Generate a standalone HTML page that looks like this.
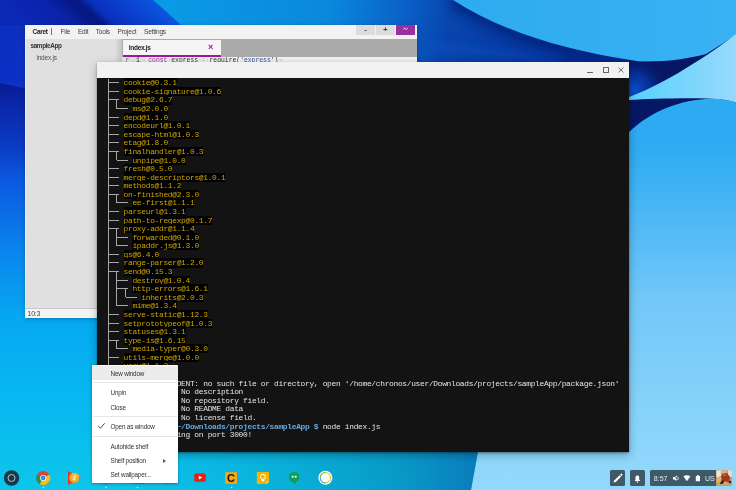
<!DOCTYPE html>
<html><head><meta charset="utf-8">
<style>
*{margin:0;padding:0;box-sizing:border-box}
html,body{width:736px;height:490px;overflow:hidden;background:#0a6fd8}
body{position:relative;font-family:"Liberation Sans",sans-serif;-webkit-font-smoothing:antialiased}
.abs{position:absolute}
#wall{position:absolute;left:0;top:0}
/* caret */
#caret{will-change:transform;position:absolute;left:25px;top:25px;width:392px;height:293px;background:#f2f2f2;box-shadow:0 1px 4px rgba(0,0,0,.25)}
#menubar{position:absolute;left:0;top:0;width:392px;height:14px;background:#f2f2f2}
.mi{position:absolute;top:2.6px;font-size:6.5px;letter-spacing:-0.2px;line-height:8px;color:#404040;white-space:nowrap}
#side{position:absolute;left:0;top:14px;width:97px;height:269px;background:#e0e0e0}
#side:after{content:"";position:absolute;right:0;top:0;width:7px;height:100%;background:linear-gradient(90deg,rgba(0,0,0,0),rgba(0,0,0,.13))}
#status{position:absolute;left:0;top:283px;width:392px;height:10px;background:#f5f5f5;border-top:1px solid #c9c9c9}
#tabbar{position:absolute;left:97px;top:14px;width:295px;height:18px;background:#ababab}
#tab{position:absolute;left:1px;top:1px;width:98px;height:17px;background:#f5f5f5;border-bottom:2px solid #9a1a9e}
#editor{position:absolute;left:97px;top:32px;width:295px;height:251px;background:#f2f2f2}
.btn{position:absolute;top:0;height:9.5px;width:19px;background:#dcdcdc;color:#444;font-size:8px;line-height:9px;text-align:center;font-weight:bold}
/* terminal */
#term{position:absolute;left:97px;top:62px;width:532px;height:389.6px;background:#131313;box-shadow:0 3px 9px rgba(0,0,0,.28),0 1px 2px rgba(0,0,0,.35)}
#ttitle{position:absolute;left:0;top:0;width:100%;height:16px;background:#f2f2f2}
#tcont{position:absolute;left:0;top:16px;width:100%;height:374px;overflow:hidden;will-change:transform}
.tr,.tw{position:absolute;font-family:"Liberation Mono",monospace;font-size:7.9px;letter-spacing:-0.31px;line-height:9px;height:9.1px;white-space:pre}
.tr{color:#cca400;background:#020202}
.tw{color:#e4e4e4}
.pr{color:#6aa6da;font-weight:bold}
/* menu */
#menu{will-change:transform;position:absolute;left:92px;top:365px;width:86px;height:118px;background:#fff;box-shadow:0 1px 3px rgba(0,0,0,.3);border-radius:1px}
.mt{position:absolute;left:18.5px;font-size:6.3px;letter-spacing:-0.17px;line-height:8px;color:#303030;white-space:nowrap}
.sep{position:absolute;left:1px;width:84px;height:1px;background:#e6e6e6}
/* status */
.sbtn{position:absolute;top:470.3px;height:15.6px;background:#3e5968;border-radius:1.5px}
</style></head><body>
<svg id="wall" width="736" height="490" viewBox="0 0 736 490">
<defs>
<linearGradient id="gbase" gradientUnits="userSpaceOnUse" x1="0" y1="0" x2="0" y2="490">
 <stop offset="0" stop-color="#0b2fbe"/>
 <stop offset="0.16" stop-color="#0b31c4"/>
 <stop offset="0.3" stop-color="#0b45cc"/>
 <stop offset="0.37" stop-color="#0a5ae0"/>
 <stop offset="0.51" stop-color="#0a84ec"/>
 <stop offset="0.65" stop-color="#06a8f2"/>
 <stop offset="0.82" stop-color="#08b8f0"/>
 <stop offset="1" stop-color="#0cc6ea"/>
</linearGradient>
<linearGradient id="gdark" gradientUnits="userSpaceOnUse" x1="0" y1="85" x2="0" y2="175">
 <stop offset="0" stop-color="#081c96" stop-opacity="1"/>
 <stop offset="0.25" stop-color="#0a24a4" stop-opacity="0.8"/>
 <stop offset="1" stop-color="#0a30b8" stop-opacity="0"/>
</linearGradient>
<linearGradient id="gbl" gradientUnits="userSpaceOnUse" x1="110" y1="0" x2="478" y2="0">
 <stop offset="0" stop-color="#0aa8d8" stop-opacity="0"/>
 <stop offset="0.45" stop-color="#08a4cc" stop-opacity="0.6"/>
 <stop offset="0.8" stop-color="#0894c4" stop-opacity="0.92"/>
 <stop offset="1" stop-color="#0a7cbc" stop-opacity="1"/>
</linearGradient>
<linearGradient id="glow" gradientUnits="userSpaceOnUse" x1="0" y1="120" x2="0" y2="480">
 <stop offset="0" stop-color="#2caaf2"/>
 <stop offset="0.08" stop-color="#2eabf2"/>
 <stop offset="0.36" stop-color="#5cbef6"/>
 <stop offset="0.5" stop-color="#72c8f8"/>
 <stop offset="0.8" stop-color="#86d2fa"/>
 <stop offset="1" stop-color="#92d8fc"/>
</linearGradient>
<linearGradient id="gup" x1="0" y1="0" x2="1" y2="0">
 <stop offset="0" stop-color="#2eaaf0"/>
 <stop offset="1" stop-color="#38b2f3"/>
</linearGradient>
<linearGradient id="gwedge" gradientUnits="userSpaceOnUse" x1="629" y1="0" x2="736" y2="0">
 <stop offset="0" stop-color="#56d2fd"/>
 <stop offset="0.45" stop-color="#74d4fc"/>
 <stop offset="1" stop-color="#98dafb"/>
</linearGradient>
<linearGradient id="gtop" gradientUnits="userSpaceOnUse" x1="170" y1="0" x2="560" y2="70">
 <stop offset="0" stop-color="#0a9ae6"/>
 <stop offset="0.4" stop-color="#0a88dc"/>
 <stop offset="0.58" stop-color="#0a62c8"/>
 <stop offset="0.7" stop-color="#0846ae"/>
 <stop offset="1" stop-color="#072e94"/>
</linearGradient>
<linearGradient id="gband" gradientUnits="userSpaceOnUse" x1="0" y1="0" x2="153" y2="0" gradientTransform="skewX(48)">
 <stop offset="0" stop-color="#0b28b6"/>
 <stop offset="0.3" stop-color="#0a22a8"/>
 <stop offset="0.42" stop-color="#071a8c"/>
 <stop offset="0.5" stop-color="#061782"/>
 <stop offset="0.58" stop-color="#0a30bc"/>
 <stop offset="0.8" stop-color="#0a42d0"/>
 <stop offset="1" stop-color="#0a56e0"/>
</linearGradient>
<filter id="blur5" x="-20%" y="-50%" width="140%" height="200%"><feGaussianBlur stdDeviation="5"/></filter>
<linearGradient id="gnavy" gradientUnits="userSpaceOnUse" x1="420" y1="25" x2="620" y2="62">
 <stop offset="0" stop-color="#0a48b8"/>
 <stop offset="1" stop-color="#062c92"/>
</linearGradient>
<radialGradient id="gglow" gradientUnits="userSpaceOnUse" cx="634" cy="90" r="34">
 <stop offset="0" stop-color="#0a50cc"/>
 <stop offset="0.5" stop-color="#0838a8" stop-opacity="0.7"/>
 <stop offset="1" stop-color="#061766" stop-opacity="0"/>
</radialGradient>
</defs>
<rect width="736" height="490" fill="url(#gbase)"/>
<path d="M0,83 L97,104 L97,200 L0,200 Z" fill="url(#gdark)"/>
<!-- top bands -->
<path d="M0,0 L153,0 L181,25 L0,25 Z" fill="url(#gband)"/>
<path d="M153,0 L736,0 L736,140 L630,140 L630,62 L97,62 L97,25 L181,25 Z" fill="url(#gtop)"/>
<path d="M453,0 C500,30 560,50 640,61.5" fill="none" stroke="#05287f" stroke-width="16" filter="url(#blur5)" opacity="0.85"/>
<path d="M430,40 L560,58 L560,64 L430,50 Z" fill="#0a50c4" opacity="0.5" filter="url(#blur5)"/>
<rect x="629" y="45" width="107" height="100" fill="#061766"/>
<!-- upper light-blue -->
<path d="M453,0 L736,0 L736,35 L706,54 C690,58 670,62 640,61.5 C560,50 500,30 453,0 Z" fill="url(#gup)"/>
<!-- navy between -->
<path d="M629,61 C670,62 690,58 706,54 L700,62 C680,75 655,88 629,97 Z" fill="url(#gglow)"/>
<!-- wedge -->
<path d="M736,34 C700,62 655,88 629,97 L629,100 C650,98.5 690,97.5 712,98.7 C722,99.3 730,100.5 736,102.4 Z" fill="url(#gwedge)"/>
<!-- lower light blue -->
<path d="M736,102.4 C730,100.5 722,98.7 712,98.7 C680,99 650,112 629,132 L629,180 C560,260 490,360 478,452 L471,490 L736,490 Z" fill="url(#glow)"/>
<!-- bottom left shading -->
<path d="M97,440 L480,440 L471,490 L97,490 Z" fill="url(#gbl)"/>
</svg>

<!-- Caret window -->
<div id="caret">
 <div id="menubar">
  <div class="mi" style="left:7.6px;font-size:6.5px;letter-spacing:-0.3px;font-weight:bold;color:#222">Caret</div>
  <div class="abs" style="left:26.4px;top:3.3px;width:0.7px;height:7px;background:#777"></div>
  <div class="mi" style="left:35.5px">File</div>
  <div class="mi" style="left:52.9px">Edit</div>
  <div class="mi" style="left:70.7px">Tools</div>
  <div class="mi" style="left:92.5px">Project</div>
  <div class="mi" style="left:119px">Settings</div>
  <div class="btn" style="left:331px">-</div>
  <div class="btn" style="left:350.8px">+</div>
  <div class="btn" style="left:371.2px;background:#9c2fa0"><svg style="position:absolute;left:7.3px;top:2.4px" width="5" height="4"><path d="M0.5,2.4 C1.1,1 1.9,1 2.5,1.8 C3.1,2.6 3.9,2.6 4.5,1.3" fill="none" stroke="#fff" stroke-width="0.9"/></svg></div>
 </div>
 <div id="side">
  <div class="mi" style="left:5.5px;top:3px;font-size:6.4px;letter-spacing:-0.38px;font-weight:bold;color:#333">sampleApp</div>
  <div class="mi" style="left:11.4px;top:14.6px;color:#505050">index.js</div>
 </div>
 <div id="tabbar"><div id="tab">
  <div class="mi" style="left:5.8px;top:3.7px;font-size:6.5px;letter-spacing:-0.3px;font-weight:bold;color:#222">index.js</div>
  <div class="abs" style="left:85px;top:2px;font-size:9px;line-height:10px;color:#9a1a9e;font-weight:bold">×</div>
 </div></div>
 <div id="editor">
  <div class="abs" style="left:0;top:0;width:24px;height:8px;background:#e4e4e4"></div>
  <div class="abs" style="left:3.5px;top:-0.3px;font-family:'Liberation Mono',monospace;font-size:6.38px;line-height:7px;color:#666">r</div>
  <div class="abs" style="left:14px;top:-0.3px;font-family:'Liberation Mono',monospace;font-size:6.38px;line-height:7px;color:#333">1</div>
  <div class="abs" style="left:26.3px;top:-0.3px;font-family:'Liberation Mono',monospace;font-size:6.38px;line-height:7px;white-space:pre;color:#333"><span style="color:#a020a0">const</span><span style="color:#bbb">·</span>express<span style="color:#bbb">·=·</span>require('<span style="color:#3050b0">express</span>')<span style="color:#bbb">¬</span></div>
 </div>
 <div class="abs" style="left:0;top:14px;width:1px;height:269px;background:#f0f0f0"></div>
 <div id="status"><div class="mi" style="left:2.5px;top:0.9px;font-size:7px;letter-spacing:-0.25px;color:#444">10:3</div></div>
</div>

<!-- Terminal -->
<div id="term">
 <div id="ttitle">
  <div class="abs" style="left:490px;top:10px;width:6px;height:1px;background:#666"></div>
  <div class="abs" style="left:506px;top:5.3px;width:6px;height:5.4px;border:1px solid #666"></div>
  <svg class="abs" style="left:521px;top:5px" width="6" height="6"><path d="M0.5,0.5 L5.5,5.5 M5.5,0.5 L0.5,5.5" stroke="#666" stroke-width="0.9"/></svg>
 </div>
 <div id="tcont">
  <svg class="abs" style="left:0;top:0" width="532" height="374"><g stroke="#a8a8a8" stroke-width="1" shape-rendering="crispEdges">
<line x1="11.07" y1="0.50" x2="11.07" y2="9.08"/>
<line x1="11.07" y1="4.79" x2="13.29" y2="4.79"/>
<line x1="13.29" y1="4.79" x2="17.72" y2="4.79"/>
<line x1="17.72" y1="4.79" x2="22.15" y2="4.79"/>
<line x1="11.07" y1="9.08" x2="11.07" y2="17.66"/>
<line x1="11.07" y1="13.37" x2="13.29" y2="13.37"/>
<line x1="13.29" y1="13.37" x2="17.72" y2="13.37"/>
<line x1="17.72" y1="13.37" x2="22.15" y2="13.37"/>
<line x1="11.07" y1="17.66" x2="11.07" y2="26.24"/>
<line x1="11.07" y1="21.95" x2="13.29" y2="21.95"/>
<line x1="13.29" y1="21.95" x2="17.72" y2="21.95"/>
<line x1="17.72" y1="21.95" x2="22.15" y2="21.95"/>
<line x1="19.93" y1="21.95" x2="19.93" y2="26.24"/>
<line x1="11.07" y1="26.24" x2="11.07" y2="34.82"/>
<line x1="19.93" y1="26.24" x2="19.93" y2="30.53"/>
<line x1="19.93" y1="30.53" x2="22.15" y2="30.53"/>
<line x1="22.15" y1="30.53" x2="26.58" y2="30.53"/>
<line x1="26.58" y1="30.53" x2="31.01" y2="30.53"/>
<line x1="11.07" y1="34.82" x2="11.07" y2="43.40"/>
<line x1="11.07" y1="39.11" x2="13.29" y2="39.11"/>
<line x1="13.29" y1="39.11" x2="17.72" y2="39.11"/>
<line x1="17.72" y1="39.11" x2="22.15" y2="39.11"/>
<line x1="11.07" y1="43.40" x2="11.07" y2="51.98"/>
<line x1="11.07" y1="47.69" x2="13.29" y2="47.69"/>
<line x1="13.29" y1="47.69" x2="17.72" y2="47.69"/>
<line x1="17.72" y1="47.69" x2="22.15" y2="47.69"/>
<line x1="11.07" y1="51.98" x2="11.07" y2="60.56"/>
<line x1="11.07" y1="56.27" x2="13.29" y2="56.27"/>
<line x1="13.29" y1="56.27" x2="17.72" y2="56.27"/>
<line x1="17.72" y1="56.27" x2="22.15" y2="56.27"/>
<line x1="11.07" y1="60.56" x2="11.07" y2="69.14"/>
<line x1="11.07" y1="64.85" x2="13.29" y2="64.85"/>
<line x1="13.29" y1="64.85" x2="17.72" y2="64.85"/>
<line x1="17.72" y1="64.85" x2="22.15" y2="64.85"/>
<line x1="11.07" y1="69.14" x2="11.07" y2="77.72"/>
<line x1="11.07" y1="73.43" x2="13.29" y2="73.43"/>
<line x1="13.29" y1="73.43" x2="17.72" y2="73.43"/>
<line x1="17.72" y1="73.43" x2="22.15" y2="73.43"/>
<line x1="19.93" y1="73.43" x2="19.93" y2="77.72"/>
<line x1="11.07" y1="77.72" x2="11.07" y2="86.30"/>
<line x1="19.93" y1="77.72" x2="19.93" y2="82.01"/>
<line x1="19.93" y1="82.01" x2="22.15" y2="82.01"/>
<line x1="22.15" y1="82.01" x2="26.58" y2="82.01"/>
<line x1="26.58" y1="82.01" x2="31.01" y2="82.01"/>
<line x1="11.07" y1="86.30" x2="11.07" y2="94.88"/>
<line x1="11.07" y1="90.59" x2="13.29" y2="90.59"/>
<line x1="13.29" y1="90.59" x2="17.72" y2="90.59"/>
<line x1="17.72" y1="90.59" x2="22.15" y2="90.59"/>
<line x1="11.07" y1="94.88" x2="11.07" y2="103.46"/>
<line x1="11.07" y1="99.17" x2="13.29" y2="99.17"/>
<line x1="13.29" y1="99.17" x2="17.72" y2="99.17"/>
<line x1="17.72" y1="99.17" x2="22.15" y2="99.17"/>
<line x1="11.07" y1="103.46" x2="11.07" y2="112.04"/>
<line x1="11.07" y1="107.75" x2="13.29" y2="107.75"/>
<line x1="13.29" y1="107.75" x2="17.72" y2="107.75"/>
<line x1="17.72" y1="107.75" x2="22.15" y2="107.75"/>
<line x1="11.07" y1="112.04" x2="11.07" y2="120.62"/>
<line x1="11.07" y1="116.33" x2="13.29" y2="116.33"/>
<line x1="13.29" y1="116.33" x2="17.72" y2="116.33"/>
<line x1="17.72" y1="116.33" x2="22.15" y2="116.33"/>
<line x1="19.93" y1="116.33" x2="19.93" y2="120.62"/>
<line x1="11.07" y1="120.62" x2="11.07" y2="129.20"/>
<line x1="19.93" y1="120.62" x2="19.93" y2="124.91"/>
<line x1="19.93" y1="124.91" x2="22.15" y2="124.91"/>
<line x1="22.15" y1="124.91" x2="26.58" y2="124.91"/>
<line x1="26.58" y1="124.91" x2="31.01" y2="124.91"/>
<line x1="11.07" y1="129.20" x2="11.07" y2="137.78"/>
<line x1="11.07" y1="133.49" x2="13.29" y2="133.49"/>
<line x1="13.29" y1="133.49" x2="17.72" y2="133.49"/>
<line x1="17.72" y1="133.49" x2="22.15" y2="133.49"/>
<line x1="11.07" y1="137.78" x2="11.07" y2="146.36"/>
<line x1="11.07" y1="142.07" x2="13.29" y2="142.07"/>
<line x1="13.29" y1="142.07" x2="17.72" y2="142.07"/>
<line x1="17.72" y1="142.07" x2="22.15" y2="142.07"/>
<line x1="11.07" y1="146.36" x2="11.07" y2="154.94"/>
<line x1="11.07" y1="150.65" x2="13.29" y2="150.65"/>
<line x1="13.29" y1="150.65" x2="17.72" y2="150.65"/>
<line x1="17.72" y1="150.65" x2="22.15" y2="150.65"/>
<line x1="19.93" y1="150.65" x2="19.93" y2="154.94"/>
<line x1="11.07" y1="154.94" x2="11.07" y2="163.52"/>
<line x1="19.93" y1="154.94" x2="19.93" y2="163.52"/>
<line x1="19.93" y1="159.23" x2="22.15" y2="159.23"/>
<line x1="22.15" y1="159.23" x2="26.58" y2="159.23"/>
<line x1="26.58" y1="159.23" x2="31.01" y2="159.23"/>
<line x1="11.07" y1="163.52" x2="11.07" y2="172.10"/>
<line x1="19.93" y1="163.52" x2="19.93" y2="167.81"/>
<line x1="19.93" y1="167.81" x2="22.15" y2="167.81"/>
<line x1="22.15" y1="167.81" x2="26.58" y2="167.81"/>
<line x1="26.58" y1="167.81" x2="31.01" y2="167.81"/>
<line x1="11.07" y1="172.10" x2="11.07" y2="180.68"/>
<line x1="11.07" y1="176.39" x2="13.29" y2="176.39"/>
<line x1="13.29" y1="176.39" x2="17.72" y2="176.39"/>
<line x1="17.72" y1="176.39" x2="22.15" y2="176.39"/>
<line x1="11.07" y1="180.68" x2="11.07" y2="189.26"/>
<line x1="11.07" y1="184.97" x2="13.29" y2="184.97"/>
<line x1="13.29" y1="184.97" x2="17.72" y2="184.97"/>
<line x1="17.72" y1="184.97" x2="22.15" y2="184.97"/>
<line x1="11.07" y1="189.26" x2="11.07" y2="197.84"/>
<line x1="11.07" y1="193.55" x2="13.29" y2="193.55"/>
<line x1="13.29" y1="193.55" x2="17.72" y2="193.55"/>
<line x1="17.72" y1="193.55" x2="22.15" y2="193.55"/>
<line x1="19.93" y1="193.55" x2="19.93" y2="197.84"/>
<line x1="11.07" y1="197.84" x2="11.07" y2="206.42"/>
<line x1="19.93" y1="197.84" x2="19.93" y2="206.42"/>
<line x1="19.93" y1="202.13" x2="22.15" y2="202.13"/>
<line x1="22.15" y1="202.13" x2="26.58" y2="202.13"/>
<line x1="26.58" y1="202.13" x2="31.01" y2="202.13"/>
<line x1="11.07" y1="206.42" x2="11.07" y2="215.00"/>
<line x1="19.93" y1="206.42" x2="19.93" y2="215.00"/>
<line x1="19.93" y1="210.71" x2="22.15" y2="210.71"/>
<line x1="22.15" y1="210.71" x2="26.58" y2="210.71"/>
<line x1="26.58" y1="210.71" x2="31.01" y2="210.71"/>
<line x1="28.79" y1="210.71" x2="28.79" y2="215.00"/>
<line x1="11.07" y1="215.00" x2="11.07" y2="223.58"/>
<line x1="19.93" y1="215.00" x2="19.93" y2="223.58"/>
<line x1="28.79" y1="215.00" x2="28.79" y2="219.29"/>
<line x1="28.79" y1="219.29" x2="31.01" y2="219.29"/>
<line x1="31.01" y1="219.29" x2="35.44" y2="219.29"/>
<line x1="35.44" y1="219.29" x2="39.87" y2="219.29"/>
<line x1="11.07" y1="223.58" x2="11.07" y2="232.16"/>
<line x1="19.93" y1="223.58" x2="19.93" y2="227.87"/>
<line x1="19.93" y1="227.87" x2="22.15" y2="227.87"/>
<line x1="22.15" y1="227.87" x2="26.58" y2="227.87"/>
<line x1="26.58" y1="227.87" x2="31.01" y2="227.87"/>
<line x1="11.07" y1="232.16" x2="11.07" y2="240.74"/>
<line x1="11.07" y1="236.45" x2="13.29" y2="236.45"/>
<line x1="13.29" y1="236.45" x2="17.72" y2="236.45"/>
<line x1="17.72" y1="236.45" x2="22.15" y2="236.45"/>
<line x1="11.07" y1="240.74" x2="11.07" y2="249.32"/>
<line x1="11.07" y1="245.03" x2="13.29" y2="245.03"/>
<line x1="13.29" y1="245.03" x2="17.72" y2="245.03"/>
<line x1="17.72" y1="245.03" x2="22.15" y2="245.03"/>
<line x1="11.07" y1="249.32" x2="11.07" y2="257.90"/>
<line x1="11.07" y1="253.61" x2="13.29" y2="253.61"/>
<line x1="13.29" y1="253.61" x2="17.72" y2="253.61"/>
<line x1="17.72" y1="253.61" x2="22.15" y2="253.61"/>
<line x1="11.07" y1="257.90" x2="11.07" y2="266.48"/>
<line x1="11.07" y1="262.19" x2="13.29" y2="262.19"/>
<line x1="13.29" y1="262.19" x2="17.72" y2="262.19"/>
<line x1="17.72" y1="262.19" x2="22.15" y2="262.19"/>
<line x1="19.93" y1="262.19" x2="19.93" y2="266.48"/>
<line x1="11.07" y1="266.48" x2="11.07" y2="275.06"/>
<line x1="19.93" y1="266.48" x2="19.93" y2="270.77"/>
<line x1="19.93" y1="270.77" x2="22.15" y2="270.77"/>
<line x1="22.15" y1="270.77" x2="26.58" y2="270.77"/>
<line x1="26.58" y1="270.77" x2="31.01" y2="270.77"/>
<line x1="11.07" y1="275.06" x2="11.07" y2="283.64"/>
<line x1="11.07" y1="279.35" x2="13.29" y2="279.35"/>
<line x1="13.29" y1="279.35" x2="17.72" y2="279.35"/>
<line x1="17.72" y1="279.35" x2="22.15" y2="279.35"/>
<line x1="11.07" y1="283.64" x2="11.07" y2="287.93"/>
<line x1="11.07" y1="287.93" x2="13.29" y2="287.93"/>
<line x1="13.29" y1="287.93" x2="17.72" y2="287.93"/>
<line x1="17.72" y1="287.93" x2="22.15" y2="287.93"/>
  </g></svg>
<div style="position:absolute;left:0;top:0;width:532px;height:340px;"><div class="tr" style="top:0.30px;left:26.58px">cookie@0.3.1</div>
<div class="tr" style="top:8.88px;left:26.58px">cookie-signature@1.0.6</div>
<div class="tr" style="top:17.46px;left:26.58px">debug@2.6.7</div>
<div class="tr" style="top:26.04px;left:35.44px">ms@2.0.0</div>
<div class="tr" style="top:34.62px;left:26.58px">depd@1.1.0</div>
<div class="tr" style="top:43.20px;left:26.58px">encodeurl@1.0.1</div>
<div class="tr" style="top:51.78px;left:26.58px">escape-html@1.0.3</div>
<div class="tr" style="top:60.36px;left:26.58px">etag@1.8.0</div>
<div class="tr" style="top:68.94px;left:26.58px">finalhandler@1.0.3</div>
<div class="tr" style="top:77.52px;left:35.44px">unpipe@1.0.0</div>
<div class="tr" style="top:86.10px;left:26.58px">fresh@0.5.0</div>
<div class="tr" style="top:94.68px;left:26.58px">merge-descriptors@1.0.1</div>
<div class="tr" style="top:103.26px;left:26.58px">methods@1.1.2</div>
<div class="tr" style="top:111.84px;left:26.58px">on-finished@2.3.0</div>
<div class="tr" style="top:120.42px;left:35.44px">ee-first@1.1.1</div>
<div class="tr" style="top:129.00px;left:26.58px">parseurl@1.3.1</div>
<div class="tr" style="top:137.58px;left:26.58px">path-to-regexp@0.1.7</div>
<div class="tr" style="top:146.16px;left:26.58px">proxy-addr@1.1.4</div>
<div class="tr" style="top:154.74px;left:35.44px">forwarded@0.1.0</div>
<div class="tr" style="top:163.32px;left:35.44px">ipaddr.js@1.3.0</div>
<div class="tr" style="top:171.90px;left:26.58px">qs@6.4.0</div>
<div class="tr" style="top:180.48px;left:26.58px">range-parser@1.2.0</div>
<div class="tr" style="top:189.06px;left:26.58px">send@0.15.3</div>
<div class="tr" style="top:197.64px;left:35.44px">destroy@1.0.4</div>
<div class="tr" style="top:206.22px;left:35.44px">http-errors@1.6.1</div>
<div class="tr" style="top:214.80px;left:44.30px">inherits@2.0.3</div>
<div class="tr" style="top:223.38px;left:35.44px">mime@1.3.4</div>
<div class="tr" style="top:231.96px;left:26.58px">serve-static@1.12.3</div>
<div class="tr" style="top:240.54px;left:26.58px">setprototypeof@1.0.3</div>
<div class="tr" style="top:249.12px;left:26.58px">statuses@1.3.1</div>
<div class="tr" style="top:257.70px;left:26.58px">type-is@1.6.15</div>
<div class="tr" style="top:266.28px;left:35.44px">media-typer@0.3.0</div>
<div class="tr" style="top:274.86px;left:26.58px">utils-merge@1.0.0</div>
<div class="tr" style="top:283.44px;left:26.58px">vary@1.1.2</div>
<div class="tw" style="top:300.60px;left:0.00px">npm WARN enoent ENOENT: no such file or directory, open '/home/chronos/user/Downloads/projects/sampleApp/package.json'</div>
<div class="tw" style="top:309.18px;left:0.00px">npm WARN sampleApp No description</div>
<div class="tw" style="top:317.76px;left:0.00px">npm WARN sampleApp No repository field.</div>
<div class="tw" style="top:326.34px;left:0.00px">npm WARN sampleApp No README data</div>
<div class="tw" style="top:334.92px;left:0.00px">npm WARN sampleApp No license field.</div>
<div class="tw" style="top:343.50px;left:0.00px"><b class="pr">chronos@localhost ~/Downloads/projects/sampleApp $</b> node index.js</div>
<div class="tw" style="top:352.08px;left:0.00px">Example app listening on port 3000!</div></div>
 </div>
</div>

<!-- shelf icons -->
<svg class="abs" style="left:0;top:455px" width="736" height="35" viewBox="0 455 736 35">
 <circle cx="11.5" cy="478" r="7.7" fill="#163a4a"/>
 <circle cx="11.5" cy="478" r="3.5" fill="none" stroke="#d8e2e6" stroke-width="0.8"/>
 <!-- chrome -->
 <g transform="translate(43.2,478)">
  <circle r="7" fill="#db4437"/>
  <path d="M0,0 L-6.06,-3.5 A7,7 0 0 0 -3.5,6.06 Z" fill="#0f9d58"/>
  <path d="M0,0 L-3.5,6.06 A7,7 0 0 0 6.06,-3.5 Z" fill="#f4c20d"/>
  <circle r="3.1" fill="#fff"/>
  <circle r="2.4" fill="#4285f4"/>
 </g>
 <!-- play music -->
 <path d="M68,470.9 L81,478 L68,485 Z" fill="#e53a25"/>
 <circle cx="74.3" cy="478" r="5.1" fill="#f6a21c"/>
 <path d="M69.2,478 A5.1,5.1 0 0 1 79.4,478 Z" fill="#fbb92a" opacity="0.8"/>
 <circle cx="74.3" cy="478" r="2.6" fill="#f9c04a"/>
 <path d="M74.6,479.6 L74.6,475.8 L76.2,475.5" fill="none" stroke="#fff" stroke-width="0.7"/>
 <circle cx="73.9" cy="479.7" r="0.8" fill="#fff"/>
 <!-- youtube -->
 <rect x="194.3" y="473.6" width="11.5" height="8.1" rx="1.5" fill="#e62117"/>
 <path d="M198.8,475.7 L202.2,477.6 L198.8,479.5 Z" fill="#fff"/>
 <!-- caret -->
 <rect x="225.2" y="472.2" width="11.8" height="11.6" fill="#f9a51a"/>
 <text x="231.1" y="481.8" font-family="Liberation Sans" font-weight="bold" font-size="11" text-anchor="middle" fill="#111">C</text>
 <!-- keep -->
 <path d="M256.8,472 L269,472 L269,481.5 L266.5,484 L256.8,484 Z" fill="#f6b400"/>
 <circle cx="262.9" cy="476.8" r="2.5" fill="none" stroke="#fff" stroke-width="1"/>
 <rect x="261.6" y="479.6" width="2.6" height="1.6" fill="#fff"/>
 <path d="M266.5,484 L266.5,481.5 L269,481.5 Z" fill="#fde7a0"/>
 <!-- hangouts -->
 <circle cx="294.2" cy="477" r="5.3" fill="#0f9d58"/>
 <path d="M292,481 L294.5,484.5 L296.5,481 Z" fill="#0f9d58"/>
 <rect x="291.8" y="475.8" width="1.8" height="1.8" fill="#fff"/>
 <rect x="294.8" y="475.8" width="1.8" height="1.8" fill="#fff"/>
 <!-- canary-like -->
 <circle cx="325.4" cy="477.7" r="7" fill="#fff"/>
 <circle cx="325.4" cy="477.7" r="5.7" fill="#f6c026"/>
 <path d="M325.4,477.7 L319.7,477.7 A5.7,5.7 0 0 0 325.4,483.4 Z" fill="#42a5f5"/>
 <path d="M325.4,477.7 L325.4,472 A5.7,5.7 0 0 0 319.7,477.7 Z" fill="#7cb342"/>
 <circle cx="325.4" cy="477.7" r="4.6" fill="#fff"/>
 <!-- hidden icons bottoms -->
 <circle cx="106" cy="478" r="7" fill="#4a90d9"/>
 <rect x="131" y="472" width="13" height="11.5" fill="#c2410c"/>
 <rect x="162" y="472" width="13" height="11.5" fill="#5c6bc0"/>
 <!-- dots -->
 <circle cx="43.2" cy="487.6" r="0.7" fill="#fff"/>
 <circle cx="106" cy="487.6" r="0.7" fill="#fff"/>
 <circle cx="137.5" cy="487.6" r="0.7" fill="#fff"/>
 <circle cx="231.6" cy="487.6" r="0.7" fill="#fff"/>
</svg>

<!-- status area -->
<div class="sbtn" style="left:609.6px;width:15.2px"></div>
<div class="sbtn" style="left:629.9px;width:14.9px"></div>
<div class="sbtn" style="left:650px;width:70px;border-radius:1.5px 0 0 1.5px"></div>
<svg class="abs" style="left:600px;top:465px" width="136" height="25" viewBox="600 465 136 25">
 <path d="M613.6,482.6 L614.2,480.6 L619.6,475.2 L621.1,476.7 L615.7,482.1 Z" fill="#fff"/><path d="M620.1,474.7 L621,473.8 Q621.8,473.4 622.3,473.9 Q622.6,474.5 622.2,475 L621.6,476.2 Z" fill="#fff"/>
 <path d="M634.5,481 L640.2,481 L639.2,479.5 L639.2,477 A1.9,1.9 0 0 0 635.5,477 L635.5,479.5 Z" fill="#fff"/>
 <circle cx="637.4" cy="482" r="0.8" fill="#fff"/>
 <text x="653.8" y="480.8" font-family="Liberation Sans" font-size="7" fill="#e8eef0">8:57</text>
 <path d="M673,477 L674.6,477 L676.6,475.3 L676.6,481 L674.6,479.6 L673,479.6 Z" fill="#fff"/>
 <path d="M673.2,475 L679.6,481.2" stroke="#3e5968" stroke-width="1"/>
 <path d="M677.6,476.6 Q679.2,478.2 677.6,480" fill="none" stroke="#fff" stroke-width="0.8"/>
 <path d="M683.4,476.2 Q686.9,474.2 690.4,476.2 L686.9,481.2 Z" fill="#fff"/>
 <rect x="695.8" y="476" width="4.2" height="5.2" fill="#fff"/>
 <rect x="697" y="475.2" width="1.8" height="1" fill="#fff"/>
 <text x="704.9" y="480.8" font-family="Liberation Sans" font-size="7" fill="#e8eef0">US</text>
 <!-- avatar -->
 <rect x="716.3" y="470.3" width="15.8" height="15.6" fill="#c89a68"/>
 <rect x="716.3" y="470.3" width="4.5" height="7" fill="#ece6de"/>
 <rect x="728" y="470.3" width="4.1" height="6.5" fill="#e4ddd4"/>
 <rect x="721" y="470.3" width="6" height="3" fill="#d8b088"/>
 <path d="M720,478 L723,473.5 L727,473 L730,477 L729,482 L722,481 Z" fill="#9a3a22"/>
 <circle cx="724.6" cy="475" r="1.3" fill="#e05a30"/>
 <path d="M716.3,478 L720,476 L722,479 L718,483 L716.3,483 Z" fill="#e0b060"/>
 <circle cx="718" cy="480" r="0.9" fill="#f0c020"/>
 <path d="M720,483 L723,480 L724,482 L721,485 Z" fill="#2a1810"/>
 <circle cx="730" cy="482" r="1.2" fill="#2a1a10"/>
 <circle cx="725.5" cy="483" r="0.8" fill="#f2d040"/>
 <rect x="716.3" y="484" width="15.8" height="1.9" fill="#c8a070"/>
 </svg>
<!-- context menu -->
<div id="menu">
 <div class="abs" style="left:0;top:0.5px;width:86px;height:14.5px;background:#ececec"></div>
 <div class="mt" style="top:4.5px">New window</div>
 <div class="sep" style="top:17px"></div>
 <div class="mt" style="top:24.2px">Unpin</div>
 <div class="mt" style="top:38.5px">Close</div>
 <div class="sep" style="top:51px"></div>
 <svg class="abs" style="left:5px;top:57px" width="9" height="8"><path d="M1.3,4.2 L3.4,6.2 L7.6,1.4" fill="none" stroke="#444" stroke-width="1"/></svg>
 <div class="mt" style="top:57.7px">Open as window</div>
 <div class="sep" style="top:71px"></div>
 <div class="mt" style="top:77.8px">Autohide shelf</div>
 <div class="mt" style="top:91.6px">Shelf position</div>
 <div class="abs" style="left:71px;top:93.5px;width:0;height:0;border-left:3px solid #555;border-top:2.2px solid transparent;border-bottom:2.2px solid transparent"></div>
 <div class="mt" style="top:105.6px">Set wallpaper...</div>
</div>

</body></html>
